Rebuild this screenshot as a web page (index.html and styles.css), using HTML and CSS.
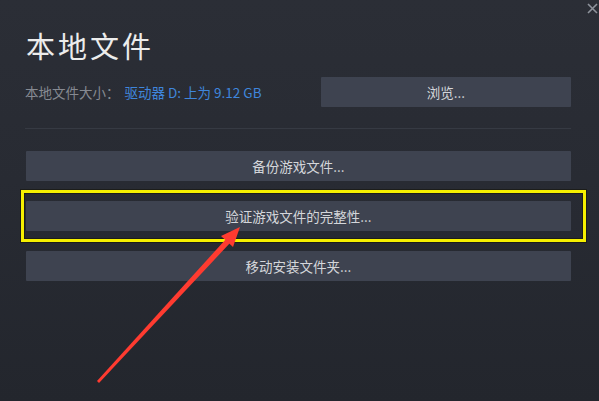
FILE: index.html
```html
<!DOCTYPE html>
<html lang="zh-CN">
<head>
<meta charset="utf-8">
<title>本地文件</title>
<link rel="stylesheet" href="styles.css">
</head>
<body>
<div class="dialog">
  <svg class="close" width="11" height="11" viewBox="0 0 11 11"><path d="M1 1 L10 10 M10 1 L1 10" stroke="#8e939c" stroke-width="1.6" fill="none"/></svg>
  <h1 class="title">本地文件</h1>
  <div class="size-row">
    <div class="size-text"><span class="label">本地文件大小：</span><span class="value">驱动器 D: 上为 9.12 GB</span></div>
    <button class="btn browse">浏览...</button>
  </div>
  <div class="divider"></div>
  <div class="actions">
    <button class="btn">备份游戏文件...</button>
    <button class="btn">验证游戏文件的完整性...</button>
    <button class="btn">移动安装文件夹...</button>
  </div>
  <div class="highlight"></div>
  <svg class="arrow" width="599" height="401" viewBox="0 0 599 401">
    <polygon points="97,381 226,239 230,243 99,383" fill="#ff3b30"/>
    <polygon points="240,227 221,236 233,247" fill="#ff3b30"/>
  </svg>
</div>
</body>
</html>
```
FILE: styles.css
```css
html, body {
  margin: 0;
  padding: 0;
}
body {
  width: 599px;
  height: 401px;
  overflow: hidden;
  background: linear-gradient(180deg, #2b2e36 0%, #282b33 45%, #23262d 100%);
  font-family: "Noto Sans CJK SC", "Noto Sans", sans-serif;
}
.dialog {
  position: relative;
  height: 401px;
  box-sizing: border-box;
  padding: 26px 28px 0 25px;
}
.close {
  position: absolute;
  top: 3px;
  right: 1px;
}
.title {
  margin: 0 0 0 1px;
  font-weight: 400;
  font-size: 29px;
  line-height: 38px;
  letter-spacing: 3px;
  color: #ececec;
}
.size-row {
  display: flex;
  align-items: center;
  justify-content: space-between;
  margin-top: 13px;
}
.size-text {
  font-size: 13.5px;
}
.label {
  color: #868a92;
}
.value {
  color: #3f86dc;
  margin-left: 5px;
}
.btn {
  display: block;
  border: none;
  margin: 0;
  padding: 0;
  height: 30px;
  background: #3e4350;
  color: #d4d6da;
  font-family: "Noto Sans CJK SC", "Noto Sans", sans-serif;
  font-size: 13.5px;
  border-radius: 1px;
}
.browse {
  width: 250px;
}
.divider {
  height: 1px;
  background: #363a43;
  margin-top: 21px;
}
.actions {
  display: flex;
  flex-direction: column;
  gap: 20px;
  margin-top: 22px;
  padding-left: 1px;
}
.highlight {
  position: absolute;
  left: 21px;
  top: 190px;
  width: 559px;
  height: 46px;
  border: 3px solid #f6f000;
  box-shadow: 0 0 0 1px #1c1d1a, inset 0 0 0 1px #1c1d1a;
}
.arrow {
  position: absolute;
  left: 0;
  top: 0;
  pointer-events: none;
}
```
